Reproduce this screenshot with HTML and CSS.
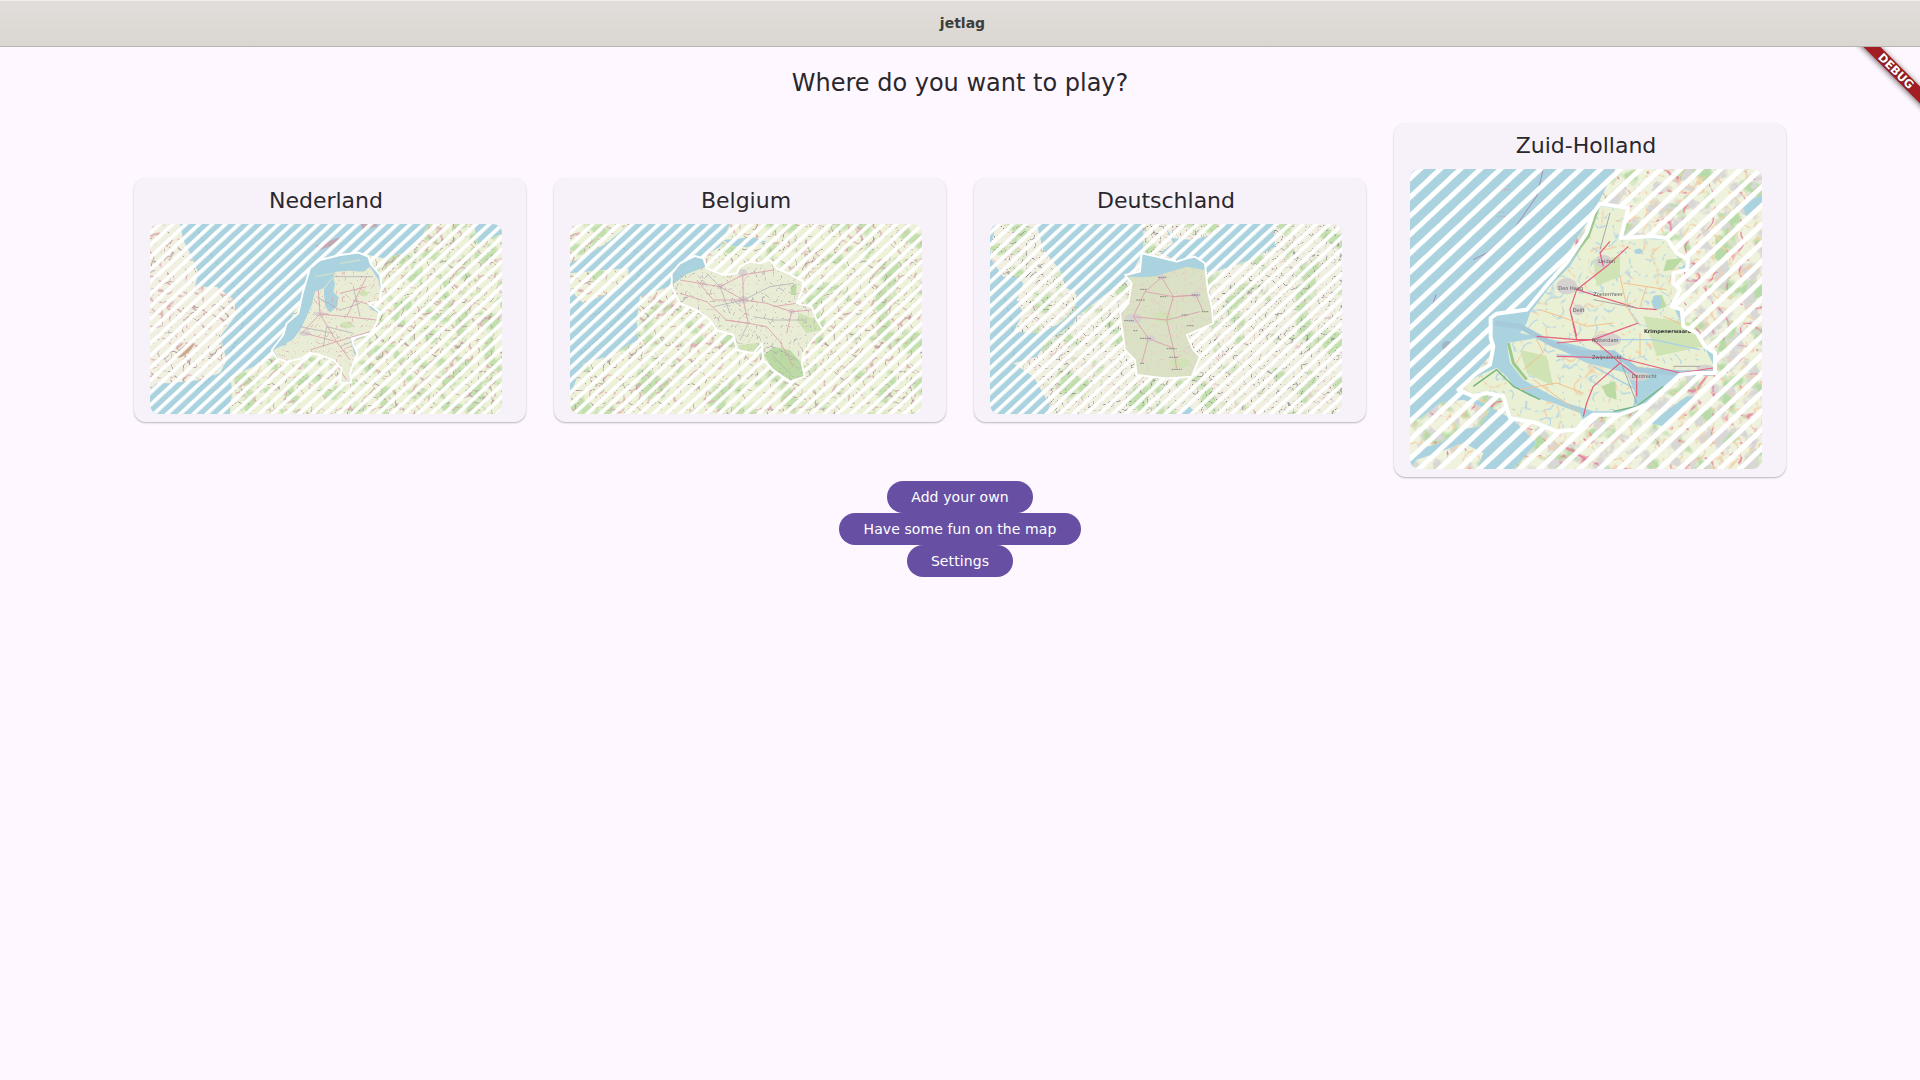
FILE: index.html
```html
<!DOCTYPE html>
<html lang="en">
<head>
<meta charset="utf-8">
<title>jetlag</title>
<link rel="stylesheet" href="styles.css">
</head>
<body>
<svg class="svg-defs" aria-hidden="true">
  <defs>
    <filter id="soft" x="-2%" y="-2%" width="104%" height="104%"><feGaussianBlur stdDeviation="1.2"/></filter>

    <filter id="veins-a" x="0" y="0" width="100%" height="100%" color-interpolation-filters="sRGB">
      <feTurbulence type="turbulence" baseFrequency=".02" numOctaves="2" seed="3" result="n"/>
      <feColorMatrix in="n" type="matrix" values="0 0 0 0 0  0 0 0 0 0  0 0 0 0 0  0 0 0 -11 1.2" result="m"/>
      <feComposite in="SourceGraphic" in2="m" operator="in"/>
    </filter>
    <filter id="veins-b" x="0" y="0" width="100%" height="100%" color-interpolation-filters="sRGB">
      <feTurbulence type="turbulence" baseFrequency=".026" numOctaves="2" seed="11" result="n"/>
      <feColorMatrix in="n" type="matrix" values="0 0 0 0 0  0 0 0 0 0  0 0 0 0 0  0 0 0 -13 1.1" result="m"/>
      <feComposite in="SourceGraphic" in2="m" operator="in"/>
    </filter>
    <filter id="veins-fine" x="0" y="0" width="100%" height="100%" color-interpolation-filters="sRGB">
      <feTurbulence type="turbulence" baseFrequency=".04" numOctaves="2" seed="7" result="n"/>
      <feColorMatrix in="n" type="matrix" values="0 0 0 0 0  0 0 0 0 0  0 0 0 0 0  0 0 0 -11 1.1" result="m"/>
      <feComposite in="SourceGraphic" in2="m" operator="in"/>
    </filter>
    <filter id="veins-wide" x="0" y="0" width="100%" height="100%" color-interpolation-filters="sRGB">
      <feTurbulence type="turbulence" baseFrequency=".012" numOctaves="2" seed="5" result="n"/>
      <feColorMatrix in="n" type="matrix" values="0 0 0 0 0  0 0 0 0 0  0 0 0 0 0  0 0 0 -14 1.1" result="m"/>
      <feComposite in="SourceGraphic" in2="m" operator="in"/>
    </filter>
    <filter id="mottle" x="0" y="0" width="100%" height="100%" color-interpolation-filters="sRGB">
      <feTurbulence type="fractalNoise" baseFrequency=".022" numOctaves="3" seed="9" result="n"/>
      <feColorMatrix in="n" type="matrix" values="0 0 0 0 0  0 0 0 0 0  0 0 0 0 0  0 0 0 7 -3.6" result="m"/>
      <feComposite in="SourceGraphic" in2="m" operator="in"/>
    </filter>
    <filter id="mottle-wide" x="0" y="0" width="100%" height="100%" color-interpolation-filters="sRGB">
      <feTurbulence type="fractalNoise" baseFrequency=".014" numOctaves="3" seed="21" result="n"/>
      <feColorMatrix in="n" type="matrix" values="0 0 0 0 0  0 0 0 0 0  0 0 0 0 0  0 0 0 8 -4.3" result="m"/>
      <feComposite in="SourceGraphic" in2="m" operator="in"/>
    </filter>

    <pattern id="hatch" width="27" height="27" patternUnits="userSpaceOnUse" patternTransform="rotate(-43)">
      <rect class="white" width="27" height="11"/>
    </pattern>
    <pattern id="hatch-wide" width="41" height="41" patternUnits="userSpaceOnUse" patternTransform="rotate(-43)">
      <rect class="white" width="41" height="15"/>
    </pattern>

    <path id="nl-c" d="M715 278L745 290L752 312L780 345L785 380L778 425L745 430L778 455L770 490L752 520L695 535L700 555L712 580L700 610L690 640L695 668L660 668L665 625L640 600L600 585L570 578L545 595L500 605L470 595L455 570L490 525L500 490L535 460L548 400L570 325L600 300L660 285Z"/>
    <path id="nl-in" d="M460 570L480 560L510 550L540 510L560 470L575 435L585 395L610 385L640 350L645 335L690 332L730 335L750 320L775 360L785 400L778 425L745 440L775 460L770 490L750 520L690 532L700 570L710 600L700 630L695 665L660 665L665 625L640 605L600 585L570 580L545 595L500 605L475 595Z"/>
    <path id="nl-uk" d="M90 192H180L190 240L215 290L235 340L225 380L290 380L345 420L345 470L300 530L320 600L300 640L240 660L150 670L110 670L90 690Z"/>
    <path id="nl-eu" d="M330 762L335 680L330 650L400 620L455 575L500 500L600 300L715 278L790 295L850 280L900 240L925 192H1060L1075 250L1146 222V762Z"/>

    <path id="be-c" d="M395 340L420 310L465 288L490 295L500 325L550 345L590 340L600 320L630 305L660 310L690 300L710 325L745 340L790 365L785 395L770 430L815 440L830 480L850 510L825 530L790 580L785 610L795 650L750 665L700 630L670 600L665 550L640 580L590 570L580 525L530 510L510 480L470 450L420 430L395 380Z"/>
    <path id="be-out" d="M90 192H270L200 250L130 290L90 310Z M90 340L190 330L265 325L265 350L230 390L130 430L90 390Z M90 762V700L100 680L130 610L200 590L295 540L290 480L300 410L385 380L420 330L490 290L540 260L570 192H1146V762Z"/>

    <path id="de-c" d="M545 280L590 290L650 305L680 295L705 290L735 310L740 360L745 400L755 440L760 490L680 525L700 570L720 590L695 650L620 655L530 645L525 600L495 570L480 460L505 430L515 370L495 345L540 335Z"/>
    <path id="de-out" d="M110 192H230L250 270L300 330L320 385L350 400L345 450L300 490L240 520L160 515L190 460L170 420L190 370L170 350L130 350L95 300L90 260Z M160 610L230 590L260 545L340 490L350 470L440 400L500 365L550 275L550 192H610L640 250L600 280L750 340L870 300L945 260L940 192H1146V762H710L680 730L660 762H260L270 735L220 650Z M610 192H800L770 220L700 240L640 235Z"/>

    <path id="zh-c" d="M660 282L745 295L722 385L820 380L860 385L890 430L925 450L920 480L880 490L880 520L900 540L875 590L905 600L910 650L950 670L975 710L1005 730L1005 790L950 790L900 795L850 840L800 885L720 915L640 915L610 935L590 960L530 965L470 940L390 925L370 860L320 850L280 860L235 840L290 790L330 765L340 710L332 685L332 625L350 612L440 600L510 515L560 460L620 370L640 310Z"/>
    <path id="zh-out" d="M705 178H1146V1078H400L470 1000L400 930L240 840L460 590L640 310Z M90 940L130 920L180 880L250 870L330 900L300 950L240 960L180 1000L110 1020L90 1040Z M90 1078L110 1050L170 1030L250 1000L310 1030L290 1078Z"/>
    <path id="zh-in" d="M660 290L745 300L722 385L860 390L925 455L880 495L900 545L880 590L910 655L975 715L1005 775L950 785L900 790L860 785L770 790L690 740L600 710L520 690L470 680L420 670L440 640L450 610L510 530L570 470L620 390Z M380 700L470 685L540 720L620 760L740 790L765 850L760 890L700 905L640 905L560 880L500 850L430 810L390 760Z M240 835L300 795L350 775L380 800L400 830L450 860L520 880L600 910L610 935L590 960L530 960L470 935L395 920L375 860L320 845L280 855Z"/>

    <mask id="nl-m"><rect class="white" x="90" y="192" width="1056" height="570"/><use class="black" href="#nl-c"/></mask>
    <mask id="be-m"><rect class="white" x="90" y="192" width="1056" height="570"/><use class="black" href="#be-c"/></mask>
    <mask id="de-m"><rect class="white" x="90" y="192" width="1056" height="570"/><use class="black" href="#de-c"/></mask>
    <mask id="zh-m"><rect class="white" x="90" y="178" width="1056" height="900"/><use class="black" href="#zh-c"/></mask>
  </defs>
</svg>

<header class="titlebar"><span class="titlebar-text">jetlag</span></header>

<div class="banner-clip"><div class="banner">DEBUG</div></div>

<main class="page">
  <h1 class="question">Where do you want to play?</h1>
  <section class="cards">
    <article class="card">
      <h2 class="card-title">Nederland</h2>
      <svg class="map" viewBox="90 192 1056 570" role="img" aria-label="Map of Nederland">
        <g filter="url(#soft)">
          <rect class="water" x="90" y="192" width="1056" height="570"/>
          <use class="land-pale" href="#nl-uk"/>
          <use class="land-pale-green" href="#nl-eu"/>
          <use class="m-green" href="#nl-eu" filter="url(#mottle)"/>
          <use class="v-pink" href="#nl-uk" filter="url(#veins-a)"/>
          <use class="v-brown" href="#nl-uk" filter="url(#veins-b)"/>
          <use class="v-pink" href="#nl-eu" filter="url(#veins-a)"/>
          <use class="v-brown" href="#nl-eu" filter="url(#veins-b)"/>
          <ellipse class="t-brown-blob" cx="195" cy="570" rx="34" ry="12" transform="rotate(-40 195 570)"/>
          <path class="t-sea-line" d="M230 200C260 290 330 350 370 420C390 480 340 600 230 690"/>
          <path class="t-grey-band" d="M590 265L660 240M725 200L770 192"/>
          <use class="water" href="#nl-c"/>
          <use class="land" href="#nl-in"/>
          <path class="water" d="M612 386L640 352L645 372L640 396L656 412L650 440L630 458L616 440L612 405Z"/>
          <path class="water-line" d="M500 552L545 530M515 568L555 548M530 582L570 562"/>
          <path class="land-line" d="M585 350L640 340M660 310L720 300"/>
          <ellipse class="land-green" cx="680" cy="495" rx="20" ry="10"/>
          <ellipse class="land-green" cx="730" cy="400" rx="14" ry="8"/>
          <use class="v-pink" href="#nl-in" filter="url(#veins-fine)"/>
          <ellipse class="urban" cx="600" cy="462" rx="16" ry="7"/>
          <ellipse class="urban" cx="555" cy="520" rx="18" ry="8"/>
          <path class="road-pink" d="M545 520L600 462L680 470L770 480M600 462L650 545L690 600M555 520L650 545L750 515M600 462L595 390M680 470L740 350M650 545L570 570M640 600L680 660M700 420L770 440M660 400L740 380"/>
          <path class="road-grey" d="M640 350L760 350M620 500L700 520M590 410L660 450L720 430M540 500L640 520M660 560L730 530M700 380L720 470M610 560L620 500"/>
        </g>
        <rect x="90" y="192" width="1056" height="570" fill="url(#hatch)" mask="url(#nl-m)"/>
        <use class="outline" href="#nl-c"/>
      </svg>
    </article>

    <article class="card">
      <h2 class="card-title">Belgium</h2>
      <svg class="map" viewBox="90 192 1056 570" role="img" aria-label="Map of Belgium">
        <g filter="url(#soft)">
          <rect class="water" x="90" y="192" width="1056" height="570"/>
          <use class="land-pale-green" href="#be-out"/>
          <use class="m-green" href="#be-out" filter="url(#mottle-wide)"/>
          <use class="v-pink" href="#be-out" filter="url(#veins-a)"/>
          <use class="v-brown" href="#be-out" filter="url(#veins-b)"/>
          <path class="water" d="M550 240L640 232L680 245L620 262L575 258Z"/>
          <path class="t-sea-line" d="M130 470C220 460 300 370 310 300C300 260 270 280 240 260M120 580C180 540 240 470 270 430"/>
          <use class="land" href="#be-c"/>
          <path class="water" d="M395 340L420 310L465 288L490 295L497 320L440 342L400 372Z"/>
          <path class="land-green-strong" d="M672 585L700 560L750 570L785 610L790 650L750 660L700 630Z"/>
          <path class="land-green" d="M595 555L660 548L650 575L600 570Z M780 460L830 480L845 510L800 520L770 480Z"/>
          <path class="land-green-strong" d="M752 380L770 370L768 405L752 405Z"/>
          <use class="v-grey" href="#be-c" filter="url(#veins-fine)"/>
          <path class="water" d="M400 360L425 318L465 293L488 300L492 318L440 340Z"/>
          <ellipse class="urban" cx="610" cy="420" rx="16" ry="11"/>
          <ellipse class="urban" cx="608" cy="338" rx="13" ry="11"/>
          <ellipse class="urban" cx="540" cy="380" rx="9" ry="7"/>
          <ellipse class="urban" cx="755" cy="455" rx="10" ry="7"/>
          <path class="road-pink" d="M420 360L480 370L540 380L610 420L680 430L755 455L815 450M608 345L610 420L625 490L680 500L720 545L760 620M470 360L520 420L610 420M540 380L608 345L700 330M420 400L500 425L560 480L625 490M625 490L555 480M755 455L740 520M700 440L770 430"/>
          <path class="road-grey" d="M500 340L540 380L570 460M610 420L690 380L760 370M610 420L520 440M640 470L700 480L800 480M625 490L600 540M700 590L750 640M720 570L770 600"/>
        </g>
        <rect x="90" y="192" width="1056" height="570" fill="url(#hatch)" mask="url(#be-m)"/>
        <use class="outline" href="#be-c"/>
      </svg>
    </article>

    <article class="card">
      <h2 class="card-title">Deutschland</h2>
      <svg class="map" viewBox="90 192 1056 570" role="img" aria-label="Map of Deutschland">
        <g filter="url(#soft)">
          <rect class="water" x="90" y="192" width="1056" height="570"/>
          <use class="land-pale" href="#de-out"/>
          <use class="m-green" href="#de-out" filter="url(#mottle-wide)"/>
          <use class="v-pink-light" href="#de-out" filter="url(#veins-b)"/>
          <use class="v-dark" href="#de-out" filter="url(#veins-fine)"/>
          <path class="t-sea-line" d="M130 400C150 470 180 560 150 620M320 500C300 520 270 560 250 560"/>
          <use class="land-de" href="#de-c"/>
          <ellipse class="land-green" cx="610" cy="470" rx="26" ry="16"/>
          <ellipse class="land-green" cx="660" cy="610" rx="30" ry="14"/>
          <use class="v-pink-light" href="#de-c" filter="url(#veins-fine)"/>
          <path class="water" d="M545 280L590 290L650 305L680 295L705 290L735 310L735 330L680 320L620 338L590 348L550 352L498 350L540 335Z"/>
          <ellipse class="urban" cx="520" cy="475" rx="26" ry="14"/>
          <ellipse class="urban" cx="570" cy="535" rx="16" ry="10"/>
          <ellipse class="urban" cx="605" cy="352" rx="14" ry="7"/>
          <ellipse class="urban" cx="708" cy="405" rx="14" ry="10"/>
          <path class="road-pink" d="M605 352L555 395L520 470L565 535L640 565L650 625M605 352L640 410L708 405M555 395L640 410L620 480L640 565M620 480L720 455M565 535L545 610M520 470L620 480M640 410L708 405L730 455"/>
          <path class="road-dark" d="M595 352h24M540 388h20M528 420h26M600 410h22M665 465h18M492 482h30M520 512h14M540 535h34M620 566h30M628 592h26M635 628h30M540 610h12M695 405h24M725 455h22M680 497h22"/>
        </g>
        <rect x="90" y="192" width="1056" height="570" fill="url(#hatch)" mask="url(#de-m)"/>
        <use class="outline" href="#de-c"/>
      </svg>
    </article>

    <article class="card">
      <h2 class="card-title">Zuid-Holland</h2>
      <svg class="map map-tall" viewBox="90 178 1056 900" role="img" aria-label="Map of Zuid-Holland">
        <g filter="url(#soft)">
          <rect class="water" x="90" y="178" width="1056" height="900"/>
          <path class="t-purple" d="M280 450L320 430L400 360L470 260L490 178M150 610L168 555"/>
          <path class="t-pink-label" d="M350 320h30M355 308h20M365 240h25M375 228h15"/>
          <circle class="t-wind" cx="202" cy="710" r="16"/>
          <use class="land-zh" href="#zh-out"/>
          <use class="m-green-strong" href="#zh-out" filter="url(#mottle-wide)"/>
          <use class="m-urban" href="#zh-out" filter="url(#mottle)"/>
          <use class="v-red" href="#zh-out" filter="url(#veins-wide)"/>
          <use class="v-orange" href="#zh-out" filter="url(#veins-a)"/>
          <path class="water" d="M1085 285L1146 255V295L1100 320Z M810 940L920 860L950 860L850 950Z"/>
          <use class="water" href="#zh-c"/>
          <use class="land-zh-in" href="#zh-in"/>
          <use class="v-orange" href="#zh-in" filter="url(#veins-wide)"/>
          <use class="v-blue" href="#zh-in" filter="url(#veins-a)"/>
          <path class="dune" d="M655 292L625 380L585 430L530 500"/>
          <path class="dune" d="M385 700L400 760L440 810"/>
          <path class="dune-thin" d="M280 830L350 780L400 830L480 870M700 905L770 890L850 830M835 590L815 575"/>
          <path class="land-green-strong" d="M820 560L845 555L860 590L835 600Z M665 830L705 815L710 870L680 860Z M860 450L910 445L880 480L850 485Z"/>
          <path class="land-green" d="M640 450L720 440L720 500L650 530Z M790 620L940 640L970 710L830 740Z M420 720L500 740L520 830L440 790Z"/>
          <ellipse class="urban" cx="560" cy="530" rx="32" ry="24"/>
          <ellipse class="urban" cx="670" cy="455" rx="24" ry="20"/>
          <ellipse class="urban" cx="595" cy="600" rx="18" ry="16"/>
          <ellipse class="urban" cx="680" cy="690" rx="44" ry="20"/>
          <ellipse class="urban" cx="775" cy="800" rx="32" ry="14"/>
          <ellipse class="urban" cx="975" cy="775" rx="26" ry="10"/>
          <path class="river-wide" d="M345 640L420 650L520 705L600 730L700 730L770 780L900 790L1000 790"/>
          <path class="river" d="M530 735L640 745L720 760M700 690L820 690L960 720M640 770L770 840"/>
          <ellipse class="water" cx="830" cy="578" rx="14" ry="22"/>
          <ellipse class="water" cx="775" cy="425" rx="12" ry="8"/>
          <path class="road-red" d="M745 410L680 470L590 540L570 600L590 690L640 690L720 660L775 640M590 540L770 595L830 600M570 600L590 680M640 690L720 760L770 800L770 860M720 760L640 830L620 880L610 920M470 680L590 690M530 740L720 745L900 790L1000 775M690 395L660 430L670 470M530 700L640 690"/>
          <path class="road-orange" d="M430 780L490 730L470 690M720 500L740 590L770 640M800 530L780 590M420 840L530 820L610 850M780 670L780 740M850 620L920 650M460 810L600 910M540 620L620 650L700 640M480 600L540 620M730 520L860 540"/>
          <path class="road-grey-strong" d="M690 310L660 420M640 570L770 595M720 750L770 880M880 770L960 770"/>
          <text class="map-label" x="535" y="540">Den Haag</text>
          <text class="map-label" x="655" y="460">Leiden</text>
          <text class="map-label" x="640" y="558">Zoetermeer</text>
          <text class="map-label" x="578" y="608">Delft</text>
          <text class="map-label" x="636" y="696">Rotterdam</text>
          <text class="map-label" x="636" y="748">Zwijndrecht</text>
          <text class="map-label" x="755" y="804">Dordrecht</text>
          <text class="map-label map-label-strong" x="792" y="669">Krimpenerwaard</text>
        </g>
        <rect x="90" y="178" width="1056" height="900" fill="url(#hatch-wide)" mask="url(#zh-m)"/>
        <use class="outline outline-wide" href="#zh-c"/>
      </svg>
    </article>
  </section>

  <nav class="actions">
    <button class="pill" type="button">Add your own</button>
    <button class="pill pill-wide" type="button">Have some fun on the map</button>
    <button class="pill" type="button">Settings</button>
  </nav>
</main>
</body>
</html>
```

FILE: styles.css
```css
* { box-sizing: border-box; }
html, body { margin: 0; height: 100%; }
body {
  background: #fef7ff;
  color: #29272c;
  font-family: "DejaVu Sans", sans-serif;
  overflow: hidden;
}
.svg-defs { position: absolute; width: 0; height: 0; }

.titlebar {
  height: 47px;
  padding-bottom: 2px;
  display: flex;
  align-items: center;
  justify-content: center;
  background: linear-gradient(#e1dedb, #dad7d2);
  border-top: 1px solid #f0eeec;
  border-bottom: 1px solid #b8b4ae;
}
.titlebar-text {
  margin-left: 5px;
  font-size: 14px;
  font-weight: 700;
  color: #3d3d3b;
}

.banner-clip {
  position: absolute;
  top: 47px;
  right: 0;
  width: 80px;
  height: 80px;
  overflow: hidden;
  pointer-events: none;
}
.banner {
  position: absolute;
  top: 18px;
  right: -36px;
  width: 120px;
  height: 12px;
  line-height: 12px;
  text-align: center;
  transform: rotate(45deg);
  background: #a31e22;
  box-shadow: 0 1px 5px 1px rgba(0, 0, 0, .45);
  color: #fff;
  font-size: 11.5px;
  font-weight: 700;
  text-shadow: 0 0 2px rgba(0, 0, 0, .5);
}

.page {
  display: flex;
  flex-direction: column;
  align-items: center;
}
.question {
  margin: 20px 0 20px;
  font-size: 24px;
  line-height: 32px;
  font-weight: 400;
}
.cards {
  display: flex;
  align-items: center;
  justify-content: center;
  gap: 28px;
  padding: 4px 0;
}
.card {
  width: 392px;
  padding: 9px 24px 8px 16px;
  background: #f7f2fa;
  border-radius: 12px;
  box-shadow: 0 1px 2px rgba(0, 0, 0, .28);
}
.card-title {
  margin: 0 0 9px;
  text-align: center;
  font-size: 22px;
  line-height: 28px;
  font-weight: 400;
}
.map {
  display: block;
  width: 352px;
  height: 190px;
  border-radius: 9px;
}
.map-tall { height: 300px; }

.actions {
  display: flex;
  flex-direction: column;
  align-items: center;
}
.pill {
  height: 32px;
  padding: 0 24px;
  border: 0;
  border-radius: 16px;
  background: #6750a4;
  color: #fff;
  font-family: inherit;
  font-size: 14px;
  letter-spacing: .1px;
}
.pill-wide { padding: 0 24.5px; }

/* map paint */
.white { fill: #fff; }
.black { fill: #000; }
.water { fill: #aad3df; }
.land-pale { fill: #f0efe0; }
.land-pale-green { fill: #ecf1d8; }
.land { fill: #eaedd6; }
.land-de { fill: #dae1c4; }
.land-zh { fill: #eff2dc; }
.land-zh-in { fill: #e9f0d4; }
.land-green { fill: #d0e3b4; }
.land-green-strong { fill: #bcdaa4; }
.urban { fill: #d6d2d0; }
.outline { fill: none; stroke: #fff; stroke-width: 5.5; stroke-linejoin: round; }
.outline-wide { stroke-width: 12; }

.m-green { fill: #c2dfae; }
.m-green-strong { fill: #b7dba8; }
.m-urban { fill: #d8d7d6; }
.v-pink { fill: #dbaeb0; }
.v-pink-light { fill: #e4c6c6; }
.v-brown { fill: #b0989a; }
.v-grey { fill: #b5abb2; }
.v-dark { fill: #8b868c; }
.v-red { fill: #e6809a; }
.v-orange { fill: #f3cfa8; }
.v-blue { fill: #b8d6e4; }

.t-brown-blob { fill: #c8a98c; }
.t-sea-line, .t-grey-band, .t-purple, .t-pink-label,
.road-pink, .road-grey, .road-dark, .road-red, .road-orange, .road-grey-strong,
.river, .river-wide, .dune, .dune-thin, .water-line, .land-line { fill: none; stroke-linejoin: round; }
.t-sea-line { stroke: #8fb6cc; stroke-width: 2; stroke-dasharray: 10 5; }
.t-grey-band { stroke: #c0a8b0; stroke-width: 16; }
.t-purple { stroke: #a58ab6; stroke-width: 3; }
.t-pink-label { stroke: #d79ab8; stroke-width: 3; stroke-dasharray: 4 3; }
.t-wind { fill: #a4b4c4; }

.road-pink { stroke: #dca0ae; stroke-width: 2.6; }
.road-grey { stroke: #a9a6b0; stroke-width: 2; }
.road-dark { stroke: #7c7a78; stroke-width: 2.6; stroke-dasharray: 5 2; }
.road-red { stroke: #e5607e; stroke-width: 3.6; }
.road-orange { stroke: #f5bd86; stroke-width: 2.8; }
.road-grey-strong { stroke: #9c9c9c; stroke-width: 2.6; }
.river { stroke: #a9cfe6; stroke-width: 4; }
.river-wide { stroke: #a7cadb; stroke-width: 16; }
.dune { stroke: #9cc98e; stroke-width: 9; }
.dune-thin { stroke: #74b47a; stroke-width: 4; }
.water-line { stroke: #e9ecd4; stroke-width: 6; }
.land-line { stroke: #cfe0c8; stroke-width: 4; }

.map-label {
  font-family: "DejaVu Sans", sans-serif;
  font-size: 15px;
  fill: #555;
}
.map-label-strong { fill: #333; font-weight: 700; }
```
